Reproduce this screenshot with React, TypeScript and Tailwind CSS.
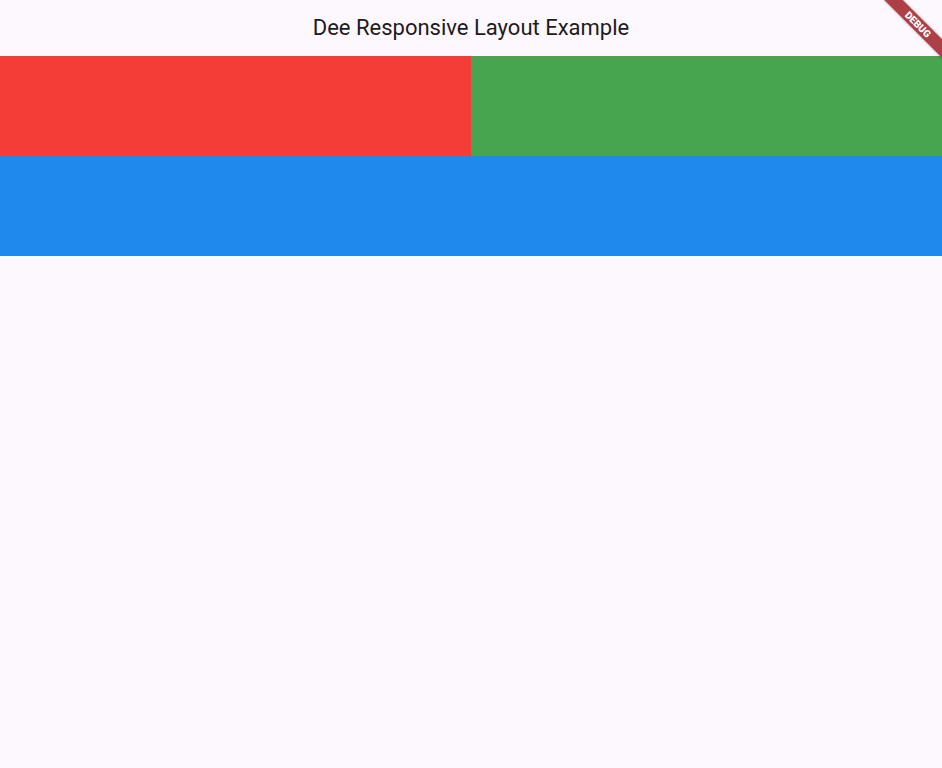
import React from 'react';

const DebugBanner = () => (
  <div className="pointer-events-none absolute right-0 top-0 h-[60px] w-[60px] overflow-hidden">
    <div className="absolute left-[-6px] top-[18px] flex h-[13px] w-[84px] rotate-45 items-center justify-center bg-[#ad3f47] shadow-[0_0_3px_rgba(0,0,0,0.35)]">
      <span className="font-['Roboto',sans-serif] text-[10px] font-black leading-none text-white">
        DEBUG
      </span>
    </div>
  </div>
);

const App = () => {
  return (
    <div className="relative min-h-[768px] overflow-hidden bg-[#fdf7fe] font-['Roboto',sans-serif]">
      <header className="flex h-[56px] items-center justify-center">
        <h1 className="text-[22px] leading-none text-[#1d1b20]">Dee Responsive Layout Example</h1>
      </header>
      <div className="flex h-[100px]">
        <div className="flex-1 bg-[#f43d37]" />
        <div className="flex-1 bg-[#46a54e]" />
      </div>
      <div className="h-[100px] bg-[#208aec]" />
      <DebugBanner />
    </div>
  );
};

export default App;
